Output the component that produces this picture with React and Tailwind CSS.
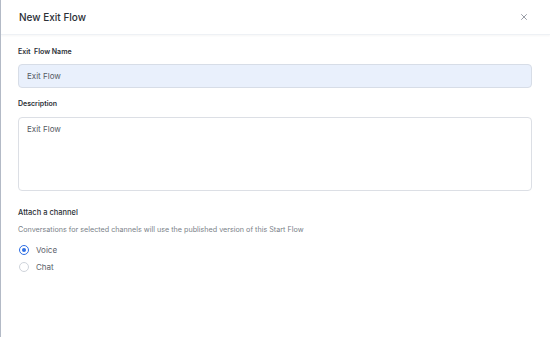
import { X } from 'lucide-react';

export default function App() {
  return (
    <div className="w-[550px] h-[337px] bg-white border-l-[1.5px] border-[#b3bac6] overflow-hidden" style={{ fontFamily: 'Inter, "Noto Sans", sans-serif' }}>
      <div className="h-[35px] flex items-center justify-between pl-[18px] pr-[21px] border-b border-[#eef1f5] shadow-[0_1px_2px_rgba(0,0,0,0.04)]">
        <h2 className="text-[10px] font-medium text-[#2b2f36]">New Exit Flow</h2>
        <X className="w-[10px] h-[10px] text-[#5b6270]" strokeWidth={1.5} />
      </div>
      <div className="pl-[17px] pr-[16px] pt-[12px]">
        <label className="block text-[7px] font-semibold text-[#2b2f36] leading-[10px] whitespace-pre">Exit  Flow Name</label>
        <div className="mt-[7px] w-[514px] h-[24px] rounded-[4px] bg-[#e9f0fc] border border-[#d7dde7] flex items-center px-[8px] text-[8px] text-[#555a63]">
          Exit Flow
        </div>
        <label className="block mt-[11px] text-[7px] font-semibold text-[#2b2f36] leading-[10px]">Description</label>
        <div className="mt-[8px] w-[514px] h-[74px] rounded-[4px] bg-white border border-[#dcdfe5] px-[8px] pt-[5px] text-[8px] text-[#555a63]">
          Exit Flow
        </div>
        <div className="mt-[17px] text-[7.5px] font-medium text-[#2b2f36] leading-[10px]">Attach a channel</div>
        <div className="mt-[7px] text-[7.2px] text-[#7a7f88] leading-[10px]">Conversations for selected channels will use the published version of this Start Flow</div>
        <div className="mt-[9px] flex flex-col gap-[6px]">
          <div className="flex items-center gap-[7px] h-[11px]">
            <span className="w-[10px] h-[10px] rounded-full border border-[#2f6fe4] flex items-center justify-center ml-[1px]">
              <span className="w-[4px] h-[4px] rounded-full bg-[#2f6fe4]" />
            </span>
            <span className="text-[8px] text-[#5c616a]">Voice</span>
          </div>
          <div className="flex items-center gap-[7px] h-[11px]">
            <span className="w-[10px] h-[10px] rounded-full border border-[#cfd4db] ml-[1px]" />
            <span className="text-[8px] text-[#5c616a]">Chat</span>
          </div>
        </div>
      </div>
    </div>
  );
}
